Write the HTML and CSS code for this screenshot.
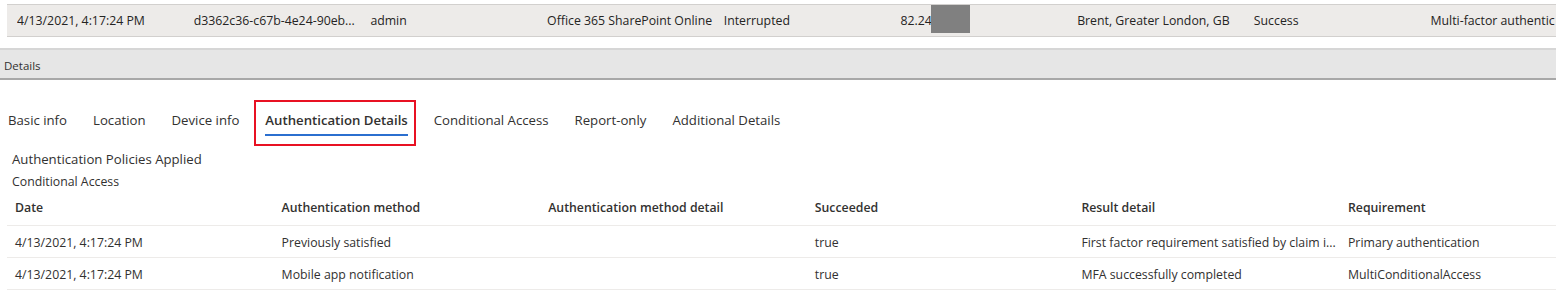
FILE: index.html
```html
<!DOCTYPE html>
<html lang="en">
<head>
<meta charset="utf-8">
<title>Sign-in details</title>
<link rel="stylesheet" href="styles.css">
</head>
<body>
  <div class="summary-row">
    <span class="cell">4/13/2021, 4:17:24 PM</span>
    <span class="cell">d3362c36-c67b-4e24-90eb...</span>
    <span class="cell">admin</span>
    <span class="cell">Office 365 SharePoint Online</span>
    <span class="cell">Interrupted</span>
    <span class="cell ip">82.24<span class="redact"></span></span>
    <span class="cell">Brent, Greater London, GB</span>
    <span class="cell">Success</span>
    <span class="cell last">Multi-factor authentic</span>
  </div>

  <div class="details-bar">Details</div>

  <nav class="tabs">
    <div class="tab"><span class="tab-label">Basic info</span></div>
    <div class="tab"><span class="tab-label">Location</span></div>
    <div class="tab"><span class="tab-label">Device info</span></div>
    <div class="tab active"><span class="tab-label">Authentication Details</span></div>
    <div class="tab"><span class="tab-label">Conditional Access</span></div>
    <div class="tab"><span class="tab-label">Report-only</span></div>
    <div class="tab"><span class="tab-label">Additional Details</span></div>
  </nav>

  <section class="panel">
    <div class="panel-title">Authentication Policies Applied</div>
    <div class="panel-sub">Conditional Access</div>
    <div class="grid">
      <div class="grid-row head">
        <span>Date</span>
        <span>Authentication method</span>
        <span>Authentication method detail</span>
        <span>Succeeded</span>
        <span>Result detail</span>
        <span>Requirement</span>
      </div>
      <div class="grid-row">
        <span>4/13/2021, 4:17:24 PM</span>
        <span>Previously satisfied</span>
        <span></span>
        <span>true</span>
        <span>First factor requirement satisfied by claim i...</span>
        <span>Primary authentication</span>
      </div>
      <div class="grid-row">
        <span>4/13/2021, 4:17:24 PM</span>
        <span>Mobile app notification</span>
        <span></span>
        <span>true</span>
        <span>MFA successfully completed</span>
        <span>MultiConditionalAccess</span>
      </div>
    </div>
  </section>
</body>
</html>
```

FILE: styles.css
```css
html, body {
  margin: 0;
  padding: 0;
  background: #ffffff;
  overflow: hidden;
}

body {
  font-family: "Open Sans", "Noto Sans", sans-serif;
  color: #323130;
  font-size: 12.3px;
}

.summary-row {
  margin: 4px 0 0 7px;
  height: 31px;
  background: #edebe9;
  border-top: 1px solid #d2d0ce;
  border-bottom: 1px solid #d2d0ce;
  display: grid;
  grid-template-columns: repeat(9, 176.7px);
  padding-left: 10px;
  align-items: center;
  white-space: nowrap;
  overflow: hidden;
  color: #252423;
}

.cell {
  overflow: hidden;
}

.cell.last {
  overflow: visible;
}

.ip {
  position: relative;
  overflow: visible;
}

.redact {
  position: absolute;
  left: 31px;
  top: -14px;
  width: 39px;
  height: 35px;
  background: #808080;
}

.details-bar {
  margin-top: 11px;
  height: 28px;
  background: #e6e6e6;
  border-top: 2px solid #d6d6d6;
  border-bottom: 2px solid #a8a8a8;
  padding-left: 4px;
  font-size: 11.5px;
  line-height: 32px;
  color: #323130;
}

.tabs {
  display: flex;
  margin-top: 20px;
  padding-left: 8px;
  gap: 26px;
  height: 46px;
}

.tab {
  position: relative;
  padding-top: 10px;
  font-size: 13.2px;
  line-height: 20px;
  color: #323130;
}

.tab-label {
  display: inline-block;
  padding-bottom: 4px;
  border-bottom: 2px solid transparent;
}

.tab.active .tab-label {
  font-weight: 600;
  border-bottom-color: #2b6fcf;
}

.tab.active::after {
  content: "";
  position: absolute;
  left: -11px;
  right: -8px;
  top: 0;
  bottom: 0;
  border: 2px solid #e81123;
}

.panel {
  padding-left: 12px;
}

.panel-title {
  margin-top: 3px;
  font-size: 13.2px;
  line-height: 20px;
}

.panel-sub {
  margin-top: 3px;
  line-height: 20px;
}

.grid {
  margin-left: -5px;
}

.grid-row {
  display: grid;
  grid-template-columns: repeat(6, 266.6px);
  height: 30px;
  padding-top: 1px;
  align-items: center;
  border-bottom: 1px solid #edebe9;
  padding-left: 8px;
  white-space: nowrap;
}

.grid-row.head {
  height: 31px;
  padding-top: 0;
  padding-bottom: 2px;
  font-weight: 600;
}
```
